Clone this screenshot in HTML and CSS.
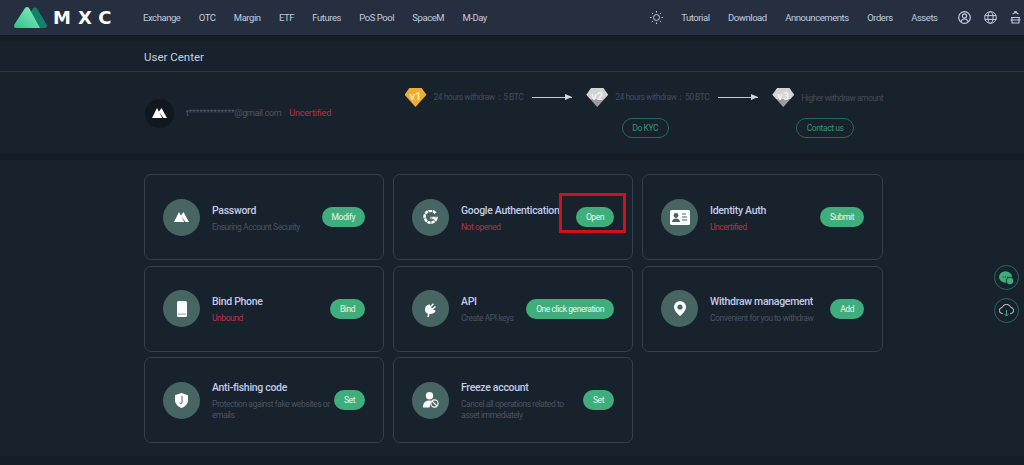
FILE: index.html
```html
<!DOCTYPE html>
<html lang="en">
    <head>
        <meta charset="UTF-8" />
        <meta name="viewport" content="width=device-width, initial-scale=1.0" />
        <title>User Center</title>
        <link rel="stylesheet" href="styles.css">
    </head>
    <body>
        <header class="topbar">
            <a class="logo">
                <svg width="33" height="21" viewBox="0 0 33 21">
                    <defs>
                        <linearGradient id="logoLeft" x1="0" y1="1" x2="1" y2="0">
                            <stop offset="0" stop-color="#2fc28a" />
                            <stop offset="1" stop-color="#8ff0c0" />
                        </linearGradient>
                    </defs>
                    <path d="M23 1.500c-1-1.500-3-1.500-4 0L11 14l4 7h15.500c2 0 3-2 2-3.800z" fill="#12806a" />
                    <path d="M11 1c1-1.300 3-1.300 4 0l11 20H2.500c-2 0-3-2-2-3.800z" fill="url(#logoLeft)" />
                </svg>
                <span class="logo-text">MXC</span>
            </a>
            <nav class="nav-left">
                <a>Exchange</a>
                <a>OTC</a>
                <a>Margin</a>
                <a>ETF</a>
                <a>Futures</a>
                <a>PoS Pool</a>
                <a>SpaceM</a>
                <a>M-Day</a>
            </nav>
            <nav class="nav-right">
                <svg width="13" height="13" viewBox="0 0 13 13" fill="none" stroke="#c3cbdd" stroke-width="1">
                    <circle cx="6.500" cy="6.500" r="3" />
                    <path d="M6.500 0v1.500M6.500 11.500V13M0 6.500h1.500M11.500 6.500H13M1.900 1.900l1 1M10.100 10.100l1 1M1.900 11.100l1-1M10.100 2.900l1-1" />
                </svg>
                <a>Tutorial</a>
                <a>Download</a>
                <a>Announcements</a>
                <a>Orders</a>
                <a>Assets</a>
                <div class="nav-icons">
                    <svg width="13" height="13" viewBox="0 0 13 13" fill="none" stroke="#c3cbdd" stroke-width="1.200">
                        <circle cx="6.500" cy="6.500" r="5.800" />
                        <circle cx="6.500" cy="5" r="2.100" />
                        <path d="M2.800 10.700c.8-2 2.200-2.700 3.700-2.700s2.900.7 3.700 2.700" />
                    </svg>
                    <svg width="13" height="13" viewBox="0 0 13 13" fill="none" stroke="#c3cbdd" stroke-width="1">
                        <circle cx="6.500" cy="6.500" r="5.800" />
                        <ellipse cx="6.500" cy="6.500" rx="2.600" ry="5.800" />
                        <path d="M.7 4.600h11.600M.7 8.400h11.600" />
                    </svg>
                    <svg width="11" height="13" viewBox="0 0 11 13" fill="none" stroke="#c3cbdd" stroke-width="1.100">
                        <path d="M2.500 3.200c1.700-1.600 4.300-1.600 6 0M4 1C5 .5 6 .5 7 1" />
                        <path d="M1 6.500h9M2 6.500v5.500h7V6.500M.5 9h10" />
                    </svg>
                </div>
            </nav>
        </header>

        <section class="profile">
            <h1 class="page-title">User Center</h1>
            <div class="profile-body">
                <div class="user">
                    <span class="avatar">
                        <svg width="15" height="10" viewBox="0 0 15 10" fill="#fff">
                            <path d="M5 0 0 10h10.200zM6.800 3.800 9.500 0 15 10h-3.500z" />
                        </svg>
                    </span>
                    <span class="email">t*************@gmail.com</span>
                    <span class="status">Uncertified</span>
                </div>
                <div class="levels">
                    <div class="level">
                        <div class="level-info">
                            <span class="gem gem-gold">v1</span>
                            <span class="level-text">24 hours withdraw：5 BTC</span>
                        </div>
                    </div>
                    <span class="arrow"></span>
                    <div class="level">
                        <div class="level-info">
                            <span class="gem gem-silver">v2</span>
                            <span class="level-text">24 hours withdraw：50 BTC</span>
                        </div>
                        <a class="btn-outline">Do KYC</a>
                    </div>
                    <span class="arrow"></span>
                    <div class="level">
                        <div class="level-info">
                            <span class="gem gem-silver">v3</span>
                            <span class="level-text">Higher withdraw amount</span>
                        </div>
                        <a class="btn-outline">Contact us</a>
                    </div>
                </div>
            </div>
        </section>

        <main class="content">
            <div class="cards">
                <div class="card">
                    <span class="card-icon">
                        <svg width="15" height="10" viewBox="0 0 15 10" fill="#fff">
                            <path d="M5 0 0 10h10.200zM6.800 3.800 9.500 0 15 10h-3.500z" />
                        </svg>
                    </span>
                    <div class="card-text">
                        <h3>Password</h3>
                        <p>Ensuring Account Security</p>
                    </div>
                    <a class="btn">Modify</a>
                </div>

                <div class="card">
                    <span class="card-icon">
                        <svg width="15" height="15" viewBox="0 0 15 15" fill="none" stroke="#fff" stroke-width="2.600">
                            <path d="M12.500 3.200A6 6 0 1 0 13.500 8H7.500" stroke-dasharray="3.400 .7" />
                        </svg>
                    </span>
                    <div class="card-text">
                        <h3>Google Authentication</h3>
                        <p class="warn">Not opened</p>
                    </div>
                    <a class="btn">Open</a>
                    <span class="highlight"></span>
                </div>

                <div class="card">
                    <span class="card-icon">
                        <svg width="20" height="15" viewBox="0 0 20 15">
                            <rect width="20" height="15" rx="1.500" fill="#fff" />
                            <circle cx="6" cy="5.500" r="2.400" fill="#476563" />
                            <path d="M2 12c.3-2.600 2-3.500 4-3.500s3.700.9 4 3.500z" fill="#476563" />
                            <path d="M12 4h4M12 7h5M12 10h5" stroke="#476563" stroke-width="1" />
                        </svg>
                    </span>
                    <div class="card-text">
                        <h3>Identity Auth</h3>
                        <p class="warn">Uncertified</p>
                    </div>
                    <a class="btn">Submit</a>
                </div>

                <div class="card">
                    <span class="card-icon">
                        <svg width="10" height="16" viewBox="0 0 10 16">
                            <rect width="10" height="16" rx="1.500" fill="#fff" />
                            <rect x="1" y="12.500" width="8" height="1.200" fill="#9fb0b0" />
                        </svg>
                    </span>
                    <div class="card-text">
                        <h3>Bind Phone</h3>
                        <p class="warn">Unbound</p>
                    </div>
                    <a class="btn">Bind</a>
                </div>

                <div class="card">
                    <span class="card-icon">
                        <svg width="13" height="17" viewBox="0 0 13 17" fill="#fff">
                            <path d="M6 4.500c-3.500 0-5 2.500-5 5 0 2.200 1.200 3.800 3 4.300L3.300 17h1.500l.7-3c3.500 0 6-1.500 6-3.500L9 9.500l3-2.500-1-1-3 2.400L7 7.200l3-3-1-1-3 3z" />
                        </svg>
                    </span>
                    <div class="card-text">
                        <h3>API</h3>
                        <p>Create API keys</p>
                    </div>
                    <a class="btn">One click generation</a>
                </div>

                <div class="card">
                    <span class="card-icon">
                        <svg width="12" height="15" viewBox="0 0 12 15">
                            <path d="M6 0a6 6 0 0 0-6 6c0 3.500 3.500 7 6 9 2.500-2 6-5.500 6-9a6 6 0 0 0-6-6z" fill="#fff" />
                            <circle cx="6" cy="6" r="2.600" fill="#476563" />
                        </svg>
                    </span>
                    <div class="card-text">
                        <h3>Withdraw management</h3>
                        <p>Convenient for you to withdraw</p>
                    </div>
                    <a class="btn">Add</a>
                </div>

                <div class="card">
                    <span class="card-icon">
                        <svg width="13" height="15" viewBox="0 0 13 15">
                            <path d="M6.500 0 13 2.200V7c0 4-3 6.700-6.500 8C3 13.700 0 11 0 7V2.200z" fill="#fff" />
                            <path d="M7 3v6.500c0 1.500-2.200 1.500-2.200 0" fill="none" stroke="#476563" stroke-width="1" />
                        </svg>
                    </span>
                    <div class="card-text">
                        <h3>Anti-fishing code</h3>
                        <p>Protection against fake websites or emails</p>
                    </div>
                    <a class="btn">Set</a>
                </div>

                <div class="card">
                    <span class="card-icon">
                        <svg width="16" height="16" viewBox="0 0 16 16">
                            <circle cx="6.500" cy="3.700" r="3.700" fill="#fff" />
                            <path d="M0 15.500c0-5 2.500-7 6-7 1 0 1.500.1 2 .3L6.500 15.500z" fill="#fff" />
                            <circle cx="11.500" cy="11.500" r="3.600" fill="none" stroke="#fff" stroke-width="1.100" />
                            <path d="M9 9l5 5" stroke="#fff" stroke-width="1.100" />
                        </svg>
                    </span>
                    <div class="card-text">
                        <h3>Freeze account</h3>
                        <p>Cancel all operations related to asset immediately</p>
                    </div>
                    <a class="btn">Set</a>
                </div>
            </div>
        </main>

        <aside class="float-btns">
            <a class="float-btn">
                <svg width="15" height="14" viewBox="0 0 15 14">
                    <ellipse cx="6.500" cy="6" rx="6.500" ry="5.800" fill="#3fae7c" />
                    <circle cx="11" cy="10" r="3.800" fill="#3fae7c" stroke="#18222c" stroke-width=".8" />
                    <path d="M3.800 6h.9M6.100 6H7M8.400 6h.9" stroke="#18222c" stroke-width="1" />
                </svg>
            </a>
            <a class="float-btn">
                <svg width="15" height="13" viewBox="0 0 15 13" fill="none" stroke="#c9d3dc" stroke-width="1">
                    <path d="M4 9.500H3.500a3 3 0 0 1-.3-6A4.500 4.500 0 0 1 11.800 3.500a3 3 0 0 1-.3 6H11" />
                    <path d="M7.500 6v6M5.500 10l2 2 2-2" stroke="#3fae7c" />
                </svg>
            </a>
        </aside>
    </body>
</html>
```

FILE: styles.css
```css
/* Reset */
* {
    box-sizing: border-box;
    margin: 0;
    padding: 0;
}

html,
body {
    height: 465px;
    overflow: hidden;
}

body {
    font-family: "Roboto", "Liberation Sans", sans-serif;
    background-color: #141c25;
    color: #c3cbdd;
    position: relative;
}

/* Top bar */
.topbar {
    height: 35px;
    background-color: #252f40;
    display: flex;
    align-items: center;
    font-size: 9.500px;
    letter-spacing: -0.450px;
}

.logo {
    width: 143px;
    padding-left: 14px;
    display: flex;
    align-items: center;
    gap: 6px;
}

.logo-text {
    font-family: "DejaVu Sans", sans-serif;
    font-weight: bold;
    font-size: 18px;
    letter-spacing: 7px;
    color: #fff;
}

.nav-left {
    display: flex;
    gap: 18.300px;
}

.nav-right {
    margin-left: auto;
    padding-right: 3px;
    display: flex;
    align-items: center;
    gap: 18.500px;
}

.nav-icons {
    display: flex;
    align-items: center;
    gap: 13px;
    margin-left: 2px;
}

/* Profile panel */
.profile {
    margin-top: 6px;
    height: 113px;
    background-color: #18222c;
}

.page-title {
    height: 31px;
    padding: 9px 0 0 144px;
    font-size: 11.500px;
    font-weight: 400;
    color: #c9d0e0;
    border-bottom: 1px solid #2b3a44;
}

.profile-body {
    display: flex;
    justify-content: space-between;
    padding: 16px 141px 0 145px;
}

.user {
    display: flex;
    align-items: center;
    height: 50px;
    font-size: 9px;
}

.avatar {
    width: 29px;
    height: 29px;
    border-radius: 50%;
    background-color: #11171e;
    display: flex;
    align-items: center;
    justify-content: center;
    margin-right: 12px;
}

.email {
    color: #4d5666;
    margin-right: 8px;
    letter-spacing: -0.350px;
}

.status {
    color: #b8304a;
    letter-spacing: -0.200px;
}

.levels {
    display: flex;
    align-items: flex-start;
}

.level {
    display: flex;
    flex-direction: column;
    align-items: center;
    gap: 11px;
}

.level-info {
    display: flex;
    align-items: center;
    gap: 7px;
    height: 19px;
}

.level-text {
    font-size: 8.500px;
    letter-spacing: -0.500px;
    color: #434b5b;
    white-space: nowrap;
}

.gem {
    width: 22px;
    height: 19px;
    padding-bottom: 2px;
    display: flex;
    align-items: center;
    justify-content: center;
    font-size: 11px;
    font-weight: 700;
    color: #f8e6b0;
    clip-path: polygon(22% 0, 78% 0, 100% 35%, 50% 100%, 0 35%);
}

.gem-gold {
    background-color: #f0ae2e;
}

.gem-silver {
    background: linear-gradient(to bottom, #d3d3d3 60%, #9c9c9c 60%);
    color: #f1f1f1;
}

.arrow {
    position: relative;
    width: 40px;
    height: 1px;
    margin: 9px 14px 0 9px;
    background-color: #c3c9cf;
}

.arrow::after {
    content: "";
    position: absolute;
    right: 0;
    top: -3px;
    border-left: 7px solid #d4d8dc;
    border-top: 3.500px solid transparent;
    border-bottom: 3.500px solid transparent;
}

.btn-outline {
    height: 20px;
    margin-right: 5px;
    padding: 0 9.500px;
    border: 1px solid #256b5c;
    border-radius: 10px;
    color: #34996f;
    font-size: 8.500px;
    letter-spacing: -0.400px;
    line-height: 18px;
    white-space: nowrap;
}

/* Cards */
.content {
    margin-top: 6px;
    height: 296px;
    background-color: #18222c;
    padding: 14px 0 0 144px;
}

.cards {
    display: grid;
    grid-template-columns: 240px 240px 241px;
    grid-auto-rows: 86px;
    gap: 5.700px 9px;
}

.card {
    position: relative;
    display: flex;
    align-items: center;
    padding: 0 18px;
    border: 1px solid #333f49;
    border-radius: 7px;
}

.card-icon {
    flex-shrink: 0;
    width: 37px;
    height: 37px;
    margin-right: 12px;
    border-radius: 50%;
    background-color: #476563;
    display: flex;
    align-items: center;
    justify-content: center;
}

.card-text {
    flex: 1;
    min-width: 0;
    padding-top: 2px;
}

.card-text h3 {
    font-size: 10.500px;
    font-weight: 500;
    letter-spacing: -0.300px;
    color: #c3cbe8;
    white-space: nowrap;
    margin-bottom: 5px;
}

.card-text p {
    font-size: 8.500px;
    letter-spacing: -0.450px;
    line-height: 11px;
    color: #4a5262;
}

.card-text p.warn {
    color: #b8304a;
}

.btn {
    flex-shrink: 0;
    height: 20px;
    padding: 0 10px;
    border-radius: 10px;
    background-color: #3fae7c;
    color: #eaf6f0;
    font-size: 8.500px;
    letter-spacing: -0.450px;
    line-height: 20px;
    white-space: nowrap;
}

.highlight {
    position: absolute;
    left: 165px;
    top: 18px;
    width: 67px;
    height: 40px;
    border: 3px solid #d0101c;
}

/* Floating buttons */
.float-btns {
    position: absolute;
    left: 994px;
    top: 265px;
    display: flex;
    flex-direction: column;
    gap: 8px;
}

.float-btn {
    width: 25px;
    height: 25px;
    border: 1px solid #256b5c;
    border-radius: 50%;
    display: flex;
    align-items: center;
    justify-content: center;
}
```
